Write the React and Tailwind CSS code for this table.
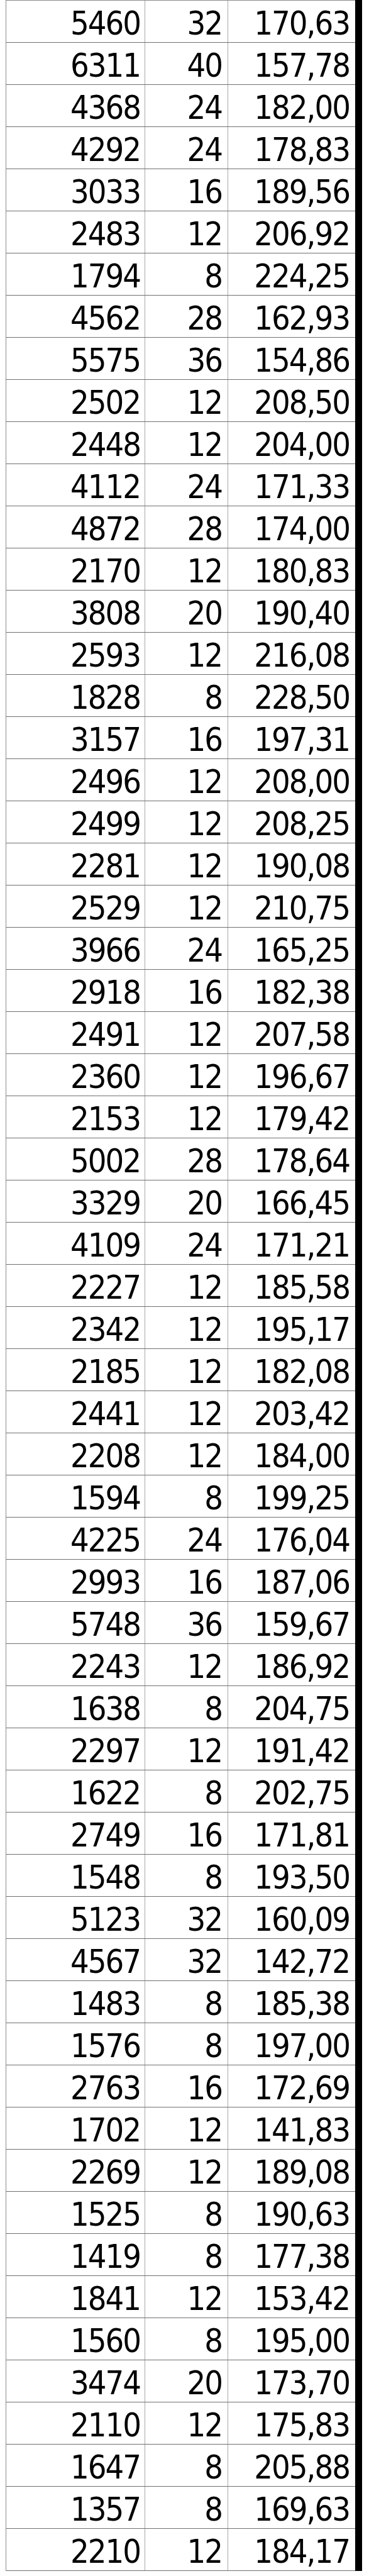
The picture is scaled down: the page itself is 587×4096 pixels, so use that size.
import React from "react";

const rows = [
  ["5460", "32", "170,63"],
  ["6311", "40", "157,78"],
  ["4368", "24", "182,00"],
  ["4292", "24", "178,83"],
  ["3033", "16", "189,56"],
  ["2483", "12", "206,92"],
  ["1794", "8", "224,25"],
  ["4562", "28", "162,93"],
  ["5575", "36", "154,86"],
  ["2502", "12", "208,50"],
  ["2448", "12", "204,00"],
  ["4112", "24", "171,33"],
  ["4872", "28", "174,00"],
  ["2170", "12", "180,83"],
  ["3808", "20", "190,40"],
  ["2593", "12", "216,08"],
  ["1828", "8", "228,50"],
  ["3157", "16", "197,31"],
  ["2496", "12", "208,00"],
  ["2499", "12", "208,25"],
  ["2281", "12", "190,08"],
  ["2529", "12", "210,75"],
  ["3966", "24", "165,25"],
  ["2918", "16", "182,38"],
  ["2491", "12", "207,58"],
  ["2360", "12", "196,67"],
  ["2153", "12", "179,42"],
  ["5002", "28", "178,64"],
  ["3329", "20", "166,45"],
  ["4109", "24", "171,21"],
  ["2227", "12", "185,58"],
  ["2342", "12", "195,17"],
  ["2185", "12", "182,08"],
  ["2441", "12", "203,42"],
  ["2208", "12", "184,00"],
  ["1594", "8", "199,25"],
  ["4225", "24", "176,04"],
  ["2993", "16", "187,06"],
  ["5748", "36", "159,67"],
  ["2243", "12", "186,92"],
  ["1638", "8", "204,75"],
  ["2297", "12", "191,42"],
  ["1622", "8", "202,75"],
  ["2749", "16", "171,81"],
  ["1548", "8", "193,50"],
  ["5123", "32", "160,09"],
  ["4567", "32", "142,72"],
  ["1483", "8", "185,38"],
  ["1576", "8", "197,00"],
  ["2763", "16", "172,69"],
  ["1702", "12", "141,83"],
  ["2269", "12", "189,08"],
  ["1525", "8", "190,63"],
  ["1419", "8", "177,38"],
  ["1841", "12", "153,42"],
  ["1560", "8", "195,00"],
  ["3474", "20", "173,70"],
  ["2110", "12", "175,83"],
  ["1647", "8", "205,88"],
  ["1357", "8", "169,63"],
  ["2210", "12", "184,17"],
];

export default function App() {
  return (
    <div className="bg-white w-[587px] h-[4096px] pl-[9px]">
      <div className="flex w-[567px]">
        <div className="w-[556px] border-l border-t border-[#8a8a8a] text-black text-[52px] leading-none tracking-[-2px] [font-family:'DejaVu_Sans_Condensed','DejaVu_Sans',sans-serif] [font-stretch:condensed]">
          {rows.map((row, i) => (
            <div
              key={i}
              className="grid grid-cols-[221px_132px_203px] h-[67px] border-b border-[#707070]"
            >
              <div className="flex items-center justify-end pt-[6px] pr-[7px] border-r border-[#a8a8a8]">
                {row[0]}
              </div>
              <div className="flex items-center justify-end pt-[6px] pr-[9px] border-r border-[#a8a8a8]">
                {row[1]}
              </div>
              <div className="flex items-center justify-end pt-[6px] pr-[10px]">
                {row[2]}
              </div>
            </div>
          ))}
        </div>
        <div className="w-[11px] bg-black" />
      </div>
    </div>
  );
}
